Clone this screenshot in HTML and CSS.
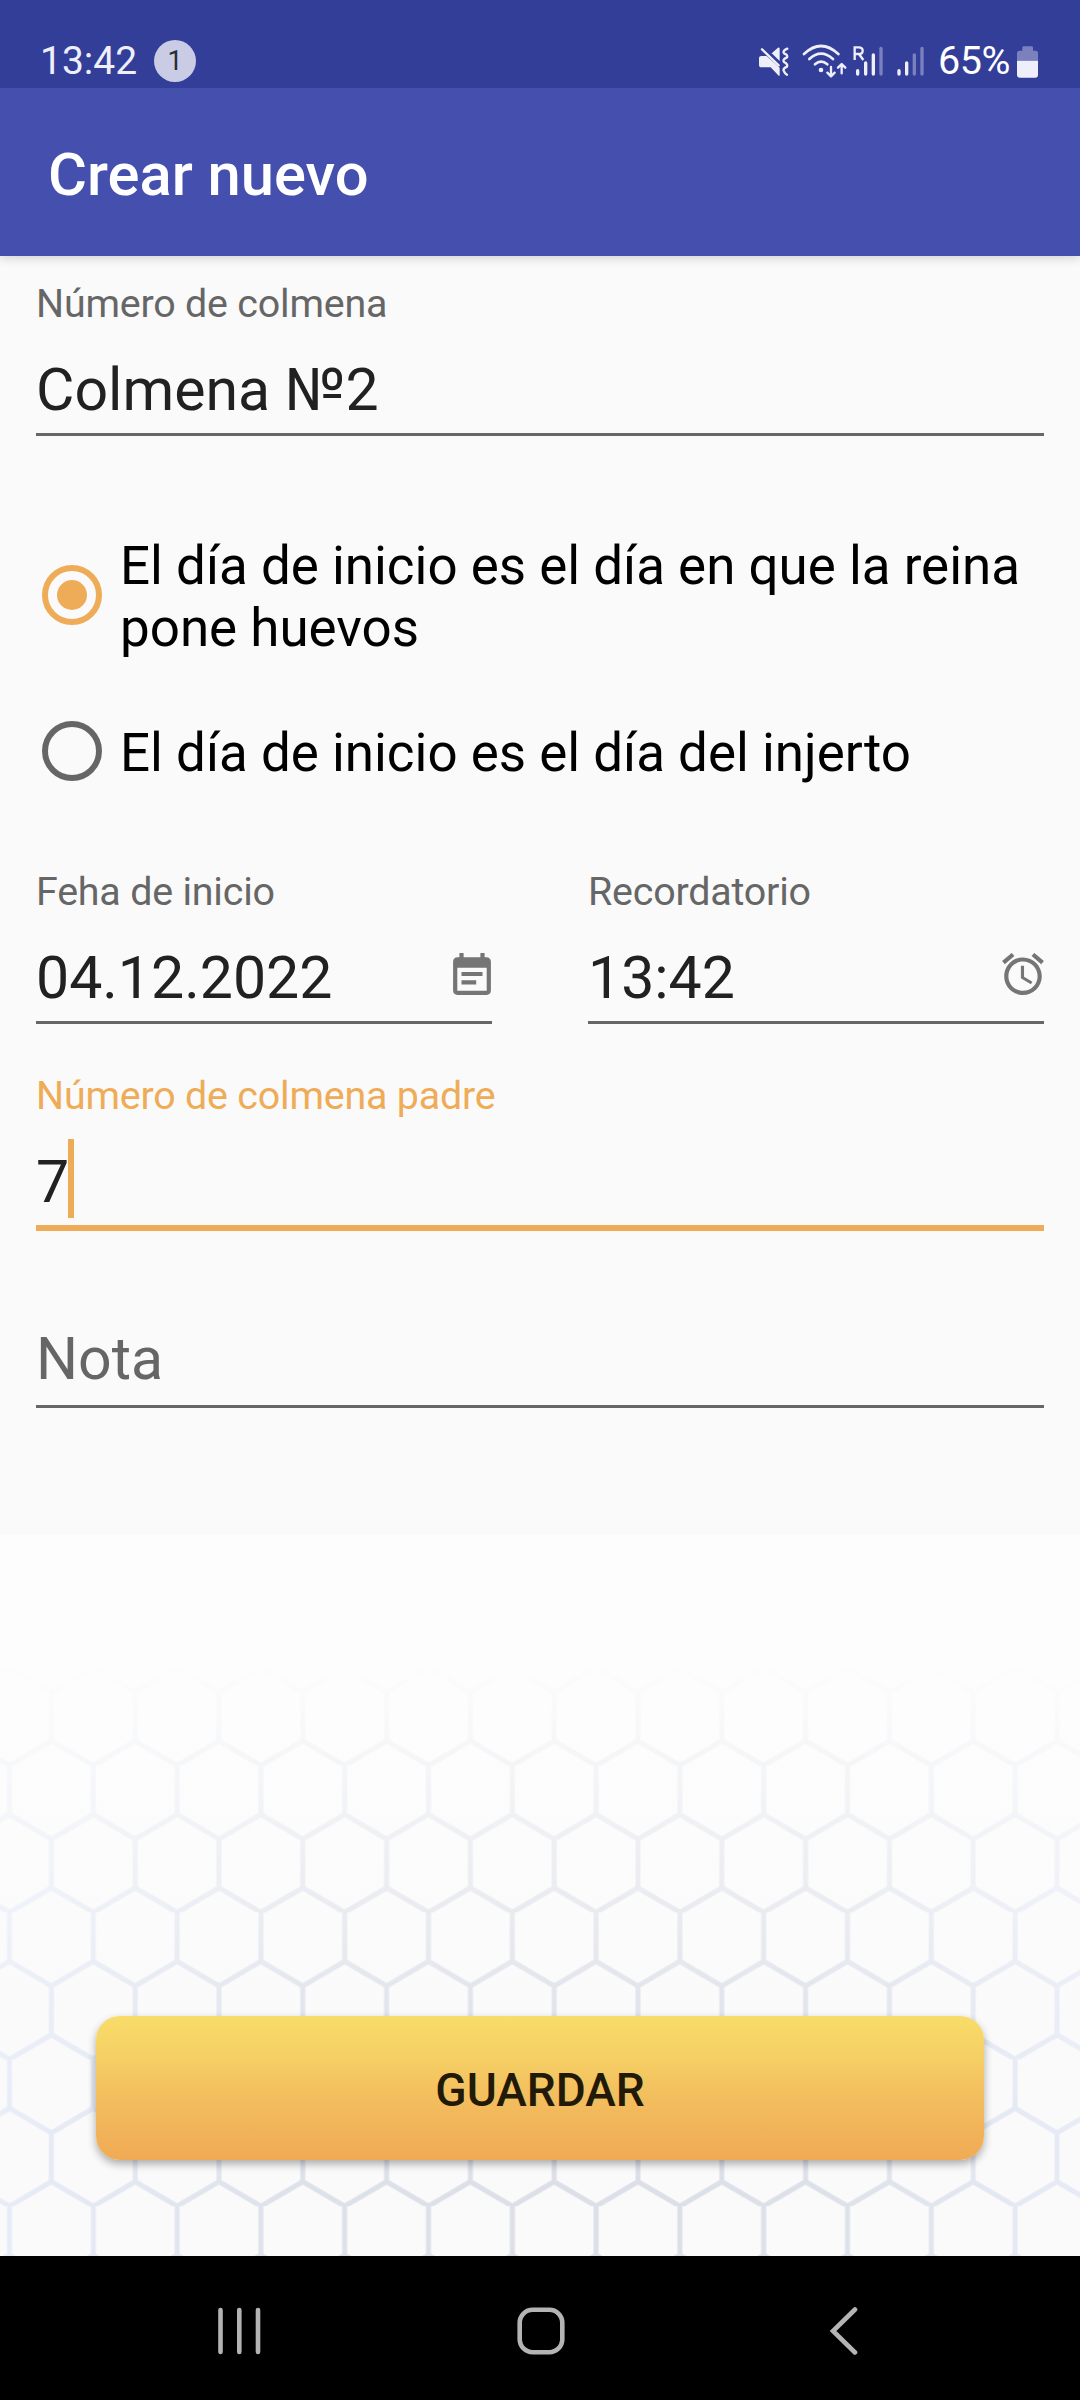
FILE: index.html
```html
<!DOCTYPE html>
<html lang="es">
<head>
<meta charset="utf-8">
<title>Crear nuevo</title>
<link rel="stylesheet" href="styles.css">
</head>
<body>
<div class="screen">
  <div class="status">
    <span class="clock">13:42</span>
    <span class="count">1</span>
    <div class="indicators">
      <svg class="ind mute" viewBox="54 70 96 105">
        <path fill="#eeeffa" d="M57 112Q57 106 64 106H80L119 141V165H116L92 140H64Q57 140 57 132ZM95 98L114 81Q119 79 119 84V121Z"/>
        <path class="line" stroke-width="7" d="M66 86L116 134"/>
        <path class="line" stroke-width="7" d="M142 84Q126 91 132 98Q145 103 141 110Q126 117 132 124Q145 131 141 138Q126 145 132 152Q134 158 141 162"/>
      </svg>
      <svg class="ind wifi" viewBox="186 70 135 105">
        <path class="line" stroke-width="8" d="M192 100Q243 52 295 100"/>
        <path class="line" stroke-width="8" d="M208 115Q243 83 279 115"/>
        <path class="line" stroke-width="8" d="M225 131Q243 115 262 131"/>
        <circle cx="243" cy="148" r="7" fill="#eeeffa"/>
        <path class="line" stroke-width="7" d="M273 139V166M262 156L273 167L284 156M305 158V131M294 141L305 130L316 141"/>
      </svg>
      <svg class="ind roam" viewBox="336 70 96 105">
        <path class="letter" d="M344 118V80H356Q368 80 368 90Q368 100 356 100H344M357 100L370 118"/>
        <path class="line" stroke-width="10" d="M353 150V160M377 127V160M400 103V160"/>
        <path class="line dim" stroke-width="10" d="M423 83V160"/>
      </svg>
      <svg class="ind cell" viewBox="468 70 87 105">
        <path class="line" stroke-width="10" d="M477 150V160M500 127V160"/>
        <path class="line dim" stroke-width="10" d="M523 103V160M546 83V160"/>
      </svg>
      <span class="percent">65%</span>
      <svg class="ind batt" viewBox="828 70 69 105">
        <path fill="#7b80bf" d="M831 120V98Q831 90 839 90H847V81Q847 77 851 77H875Q879 77 879 81V90H887Q894 90 894 98V120Z"/>
        <path fill="#eeeffa" d="M831 120H894V162Q894 171 885 171H840Q831 171 831 162Z"/>
      </svg>
    </div>
  </div>
  <header class="appbar"><h1>Crear nuevo</h1></header>
  <main class="form">
    <svg class="comb" viewBox="0 1535 1080 721">
      <defs>
        <linearGradient id="base" x1="0" y1="0" x2="0" y2="1"><stop offset="0" stop-color="#fdfdfd"/><stop offset=".25" stop-color="#fdfdfd"/><stop offset=".7" stop-color="#fafafb"/><stop offset="1" stop-color="#fafafa"/></linearGradient>
        <linearGradient id="tint"><stop offset="0" stop-color="#e7ecf7"/><stop offset=".28" stop-color="#dde1e9"/><stop offset=".5" stop-color="#dcdfe7"/><stop offset=".75" stop-color="#dce0e8"/><stop offset="1" stop-color="#e7ebf6"/></linearGradient>
        <linearGradient id="fade" x1="0" y1="0" x2="0" y2="1"><stop offset=".17" stop-color="#000"/><stop offset=".3" stop-color="#363636"/><stop offset=".45" stop-color="#787878"/><stop offset=".65" stop-color="#d0d0d0"/><stop offset=".85" stop-color="#fff"/></linearGradient>
        <pattern id="cells" patternUnits="userSpaceOnUse" x="9.5" y="2059.3" width="83.8" height="146.9">
          <path class="cell-line" d="M0 0V49L41.9 73.5L83.8 49V0M41.9 73.5V122.4M0 146.9L41.9 122.4L83.8 146.9"/>
        </pattern>
        <mask id="fader" maskUnits="userSpaceOnUse" x="0" y="1535" width="1080" height="721"><rect y="1535" width="1080" height="721" fill="url(#fade)"/></mask>
        <mask id="net" maskUnits="userSpaceOnUse" x="0" y="1535" width="1080" height="721"><rect y="1535" width="1080" height="721" fill="url(#cells)"/></mask>
      </defs>
      <rect y="1535" width="1080" height="721" fill="url(#base)"/>
      <g mask="url(#fader)"><rect y="1535" width="1080" height="721" fill="url(#tint)" mask="url(#net)"/></g>
    </svg>

    <div class="field first">
      <label>Número de colmena</label>
      <div class="value">Colmena №2</div>
    </div>

    <div class="choices">
      <div class="choice">
        <svg class="radio on" viewBox="0 0 60 60"><circle cx="30" cy="30" r="27"/><circle class="dot" cx="30" cy="30" r="15"/></svg>
        <span>El día de inicio es el día en que la reina pone huevos</span>
      </div>
      <div class="choice">
        <svg class="radio" viewBox="0 0 60 60"><circle cx="30" cy="30" r="27"/></svg>
        <span>El día de inicio es el día del injerto</span>
      </div>
    </div>

    <div class="pair">
      <div class="field">
        <label>Feha de inicio</label>
        <div class="value">04.12.2022
          <svg class="glyph" viewBox="3 1 18 20"><path d="M17 10H7v2h10v-2zM19 3h-1V1h-2v2H8V1H6v2H5c-1.110 0-1.990.9-1.990 2L3 19c0 1.100.89 2 2 2h14c1.100 0 2-.9 2-2V5c0-1.100-.9-2-2-2zm0 16H5V8h14v11zM14 14H7v2h7v-2z"/></svg>
        </div>
      </div>
      <div class="field">
        <label>Recordatorio</label>
        <div class="value">13:42
          <svg class="glyph alarm" viewBox="2 1.900 20 20.100"><path d="M22 5.720l-4.600-3.860-1.290 1.530 4.600 3.860L22 5.720zM7.880 3.390L6.600 1.860 2 5.710l1.290 1.530 4.590-3.850zM12.500 8H11v6l4.750 2.850.75-1.230-4-2.370V8zM12 4c-4.970 0-9 4.030-9 9s4.020 9 9 9c4.970 0 9-4.030 9-9s-4.030-9-9-9zm0 16c-3.870 0-7-3.130-7-7s3.130-7 7-7 7 3.130 7 7-3.130 7-7 7z"/></svg>
        </div>
      </div>
    </div>

    <div class="field active">
      <label>Número de colmena padre</label>
      <div class="value">7<span class="caret"></span></div>
    </div>

    <div class="field empty">
      <div class="value">Nota</div>
    </div>

    <button class="save">GUARDAR</button>
  </main>
  <nav class="navbar">
    <svg class="recents" viewBox="0 0 44 48"><path d="M3.500 3V45M22.300 3V45M41 3V45"/></svg>
    <svg class="home" viewBox="0 0 48 48"><rect x="2.700" y="2.700" width="42.600" height="42.600" rx="13"/></svg>
    <svg class="back" viewBox="0 0 30 52"><path d="M27 4.500L5 26L27 47.500"/></svg>
  </nav>
</div>
</body>
</html>
```
FILE: styles.css
```css
* { box-sizing: border-box; }
body { margin: 0; font-family: Roboto, "Liberation Sans", sans-serif; }
.screen { width: 1080px; height: 2400px; display: flex; flex-direction: column; background: #fafafa; overflow: hidden; }

.status { position: relative; z-index: 2; height: 88px; background: #333e98; color: #eeeffa; display: flex; align-items: center; padding: 34px 41px 0 40px; }
.clock { font-size: 39px; line-height: 46px; width: 114px; }
.count { width: 42px; height: 42px; border-radius: 50%; background: #c9cce4; color: #2b2c33; font-size: 27px; line-height: 42px; text-align: center; }
.indicators { margin-left: auto; display: flex; align-items: center; }
.ind { height: 35px; display: block; }
.mute { width: 32px; margin-right: 12px; }
.wifi { width: 45px; margin-right: 5px; }
.roam { width: 32px; margin-right: 12px; }
.cell { width: 29px; }
.batt { width: 23px; }
.line { fill: none; stroke: #eeeffa; stroke-linecap: round; stroke-linejoin: round; }
.dim { stroke: #7b80bf; }
.letter { fill: none; stroke: #eeeffa; stroke-width: 7; }
.percent { width: 91px; padding-left: 13px; font-size: 39.500px; line-height: 46px; color: #fff; white-space: nowrap; letter-spacing: -0.400px; }

.appbar { height: 168px; background: #444fae; padding: 5px 48px 0; display: flex; align-items: center; position: relative; z-index: 1; box-shadow: 0 2px 10px rgba(0, 0, 0, 0.17); }
.appbar h1 { margin: 0; font-size: 59.700px; font-weight: 500; line-height: 72px; color: #fff; }

.form { height: 2000px; padding: 23px 36px 96px; display: flex; flex-direction: column; position: relative; }
.comb { position: absolute; left: 0; bottom: 0; width: 1080px; height: 721px; }
.cell-line { fill: none; stroke: #fff; stroke-width: 5; }

.field { border-bottom: 3px solid #666; padding-bottom: 9px; }
.field label { display: block; font-size: 39.400px; letter-spacing: -0.200px; line-height: 48px; padding-top: 1px; margin-bottom: 28px; color: #666; }
.value { display: flex; align-items: center; height: 68px; font-size: 59px; line-height: 68px; color: #212121; }
.first { margin-bottom: 99px; }

.choices { display: flex; flex-direction: column; gap: 63px; margin-bottom: 83px; }
.choice { display: flex; align-items: center; padding-left: 6px; font-size: 52.920px; line-height: 62px; color: #000; }
.radio { flex: none; width: 60px; height: 60px; margin: -4px 18px 0 0; fill: none; stroke: #666; stroke-width: 6; }
.on { stroke: #efac58; }
.dot { fill: #efac58; stroke: none; }

.pair { display: grid; grid-template-columns: 1fr 1fr; gap: 96px; margin-bottom: 47px; }
.glyph { width: 38px; height: 42px; margin: -8px 1px 0 auto; fill: #757575; }
.alarm { width: 42px; margin-right: 0; }

.active { border-bottom: 6px solid #efac58; margin-bottom: 94px; }
.active label { color: #efac58; }
.caret { width: 6px; height: 79px; background: #efac58; margin-left: -1px; margin-top: -7px; }
.empty { padding-bottom: 12px; }
.empty .value { color: #666; }

.save { position: relative; margin: auto 60px 0; height: 144px; border: 0; border-radius: 24px; background: linear-gradient(#f8dc69, #f5cf64 30%, #f3c05f 52%, #f0aa55); box-shadow: 0 4px 8px rgba(0, 0, 0, 0.32); font-family: inherit; font-size: 46px; font-weight: 500; color: #221a09; padding: 4px 0 0; }

.navbar { height: 144px; background: #000; display: flex; align-items: center; padding: 6px 222px 0 217px; }
.navbar svg { fill: none; stroke: #b4b4b4; stroke-width: 4.600; stroke-linecap: round; }
.recents { width: 44px; height: 48px; }
.home { width: 48px; height: 48px; margin: 0 auto 0 256px; }
.back { width: 30px; height: 52px; }
```
